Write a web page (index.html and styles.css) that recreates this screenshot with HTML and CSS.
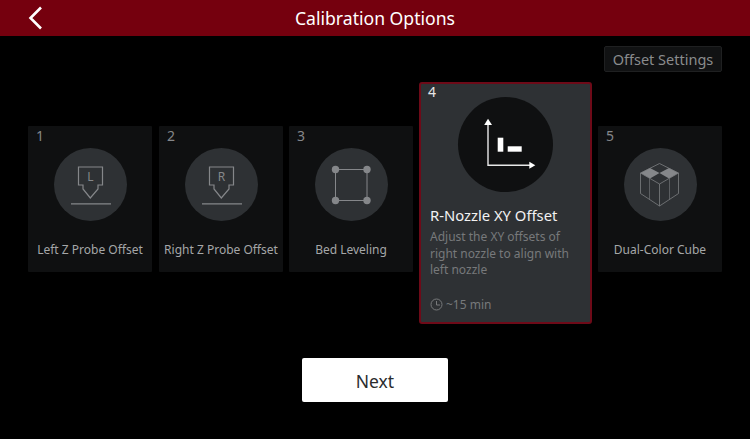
FILE: index.html
```html
<!DOCTYPE html>
<html lang="en">
<head>
  <meta charset="UTF-8">
  <title>Calibration Options</title>
  <link rel="stylesheet" href="styles.css">
</head>
<body>
  <header class="topbar">
    <svg class="back" width="16" height="24" viewBox="0 0 16 24"><path d="M14 1.500 L3.500 12 L14 22.500" fill="none" stroke="#fff" stroke-width="2.600"/></svg>
    <h1>Calibration Options</h1>
  </header>

  <div class="tools">
    <button class="offset-btn">Offset Settings</button>
  </div>

  <div class="cards">
    <div class="card">
      <span class="num">1</span>
      <div class="circle">
        <svg width="48" height="48" viewBox="0 0 48 48" fill="none" stroke="#85878a" stroke-width="1.200">
          <path d="M12.500 6 H36.500 V24 H32 V28 L24.300 37 L17 28 V24 H12.500 Z"/>
          <path d="M5 42.800 H45"/>
          <text x="24.500" y="20" class="glyph">L</text>
        </svg>
      </div>
      <p class="label">Left Z Probe Offset</p>
    </div>
    <div class="card">
      <span class="num">2</span>
      <div class="circle">
        <svg width="48" height="48" viewBox="0 0 48 48" fill="none" stroke="#85878a" stroke-width="1.200">
          <path d="M12.500 6 H36.500 V24 H32 V28 L24.300 37 L17 28 V24 H12.500 Z"/>
          <path d="M5 42.800 H45"/>
          <text x="24.500" y="20" class="glyph">R</text>
        </svg>
      </div>
      <p class="label">Right Z Probe Offset</p>
    </div>
    <div class="card">
      <span class="num">3</span>
      <div class="circle">
        <svg width="48" height="48" viewBox="0 0 48 48" fill="#85878a" stroke="none">
          <path d="M8.500 8.500 H40 V39.500 H8.500 Z" fill="none" stroke="#85878a" stroke-width="1"/>
          <circle cx="8.500" cy="8.500" r="3.700"/>
          <circle cx="40" cy="8.500" r="3.700"/>
          <circle cx="8.500" cy="39.500" r="3.700"/>
          <circle cx="40" cy="39.500" r="3.700"/>
        </svg>
      </div>
      <p class="label">Bed Leveling</p>
    </div>
    <div class="card active">
      <span class="num">4</span>
      <div class="circle big">
        <svg width="60" height="60" viewBox="0 0 60 60" fill="#fff" stroke="none">
          <path d="M12 9 V50.300 H54" fill="none" stroke="#e8e8e8" stroke-width="1.400"/>
          <path d="M12 3.700 L16 10 H8.200 Z"/>
          <path d="M59.300 50.200 L53.300 46.700 V53.700 Z"/>
          <rect x="21.700" y="22.700" width="5.600" height="14"/>
          <rect x="31.700" y="31.300" width="14" height="5.400"/>
        </svg>
      </div>
      <h2>R-Nozzle XY Offset</h2>
      <p class="desc">Adjust the XY offsets of right nozzle to align with left nozzle</p>
      <div class="time">
        <svg width="13" height="13" viewBox="0 0 13 13" fill="none" stroke="#77797b" stroke-width="1"><circle cx="6.500" cy="6.500" r="5.500"/><path d="M6.500 3 V7 H10"/></svg>
        <span>~15 min</span>
      </div>
    </div>
    <div class="card">
      <span class="num">5</span>
      <div class="circle">
        <svg width="48" height="48" viewBox="0 0 48 48" fill="none" stroke="#7b7d80" stroke-width="0.800">
          <path d="M4.500 12 L14 7 L23.500 12 L14 17.500 Z M23.500 12 L33 7 L42.500 12 L33 17.500 Z" fill="#85878a" stroke="none"/>
          <path d="M23.500 2.500 L42.500 12 V32.500 L23.500 45 L4.500 32.500 V12 Z"/>
          <path d="M4.500 12 L23.500 23 L42.500 12 M23.500 23 V45"/>
          <path d="M13.500 17.500 V38.500 M33.500 17.500 V38.500" stroke-width="0.600"/>
        </svg>
      </div>
      <p class="label">Dual-Color Cube</p>
    </div>
  </div>

  <div class="footer">
    <button class="next">Next</button>
  </div>
</body>
</html>
```

FILE: styles.css
```css
html, body {
  margin: 0;
  padding: 0;
}

body {
  width: 750px;
  height: 439px;
  overflow: hidden;
  background: #000;
  color: #a5a7a8;
  font-family: "Noto Sans", sans-serif;
}

.topbar {
  height: 36px;
  background: #75000e;
  display: flex;
  align-items: center;
  justify-content: center;
  position: relative;
}

.topbar h1 {
  margin: 0;
  font-size: 17.600px;
  font-weight: 400;
  color: #fff;
}

.back {
  position: absolute;
  left: 27px;
  top: 6px;
}

.tools {
  display: flex;
  justify-content: flex-end;
  padding: 10px 28px 0 0;
}

.offset-btn {
  width: 118px;
  height: 26px;
  padding: 0;
  background: #111213;
  border: 1px solid #1f2021;
  border-radius: 2px;
  color: #8a8c8d;
  font-family: inherit;
  font-size: 14.500px;
}

.cards {
  display: flex;
  align-items: flex-start;
  gap: 6px;
  padding: 10px 0 0 28px;
}

.card {
  position: relative;
  box-sizing: border-box;
  width: 124px;
  height: 146px;
  margin-top: 44px;
  flex: none;
  background: #0f1011;
  border-radius: 1px;
  display: flex;
  flex-direction: column;
  align-items: center;
  padding-top: 22px;
}

.card:first-child {
  margin-right: 1px;
}

.card.active {
  width: 173px;
  height: 242px;
  margin-top: 0;
  background: #2e3134;
  border: 2px solid #6e0a18;
  border-radius: 3px;
  padding-top: 13px;
  align-items: flex-start;
}

.num {
  position: absolute;
  left: 8px;
  top: 0;
  font-size: 14px;
  color: #85878a;
}

.active .num {
  left: 7px;
  top: -2px;
  color: #e6e6e6;
}

.circle {
  width: 73px;
  height: 73px;
  border-radius: 50%;
  background: #2e3134;
  display: flex;
  align-items: center;
  justify-content: center;
}

.circle.big {
  width: 95px;
  height: 95px;
  background: #0f1011;
  margin-left: 37px;
}

.label {
  margin: 20px 0 0;
  font-size: 12px;
  line-height: 18px;
  white-space: nowrap;
}

.card h2 {
  margin: 12px 0 0 9px;
  font-size: 14.800px;
  font-weight: 400;
  line-height: 22px;
  color: #f2f2f2;
}

.desc {
  margin: 3px 7px 0 9px;
  font-size: 12px;
  line-height: 16.500px;
  color: #77797b;
}

.time {
  display: flex;
  align-items: center;
  gap: 3px;
  margin: 17px 0 0 9px;
  font-size: 12px;
  line-height: 18px;
  color: #77797b;
}

.glyph {
  font-family: "Noto Sans", sans-serif;
  font-size: 12px;
  text-anchor: middle;
  fill: #85878a;
  stroke: none;
}

.footer {
  display: flex;
  justify-content: center;
  padding-top: 34px;
}

.next {
  width: 146px;
  height: 44px;
  padding: 1px 0 0;
  background: #fff;
  border: none;
  border-radius: 2px;
  color: #2a2c2e;
  font-family: inherit;
  font-size: 17.500px;
}
```
